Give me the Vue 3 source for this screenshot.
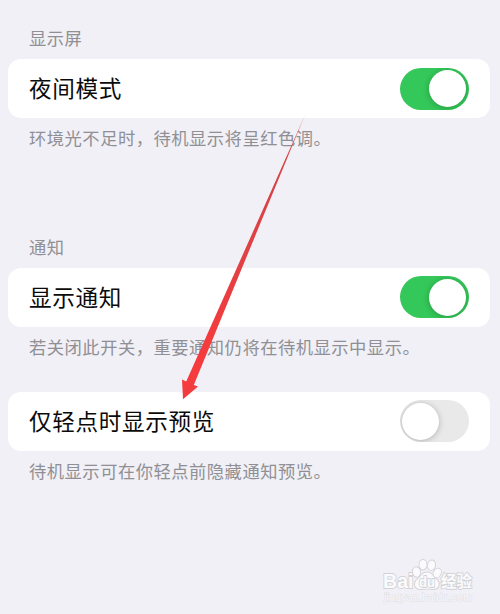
<script setup>
import { ref } from 'vue';

const groups = ref([
	{
		id: 'night',
		header: '显示屏',
		label: '夜间模式',
		footer: '环境光不足时，待机显示将呈红色调。',
		on: true,
	},
	{
		id: 'notice',
		header: '通知',
		label: '显示通知',
		footer: '若关闭此开关，重要通知仍将在待机显示中显示。',
		on: true,
	},
	{
		id: 'preview',
		header: '',
		label: '仅轻点时显示预览',
		footer: '待机显示可在你轻点前隐藏通知预览。',
		on: false,
	},
]);

const toggle = (group) => {
	group.on = !group.on;
};
</script>

<template>
	<main class="settings">
		<section
			v-for="group in groups"
			:key="group.id"
			class="group"
			:class="group.id"
		>
			<h2 v-if="group.header" class="header">{{ group.header }}</h2>
			<div class="card">
				<span class="label">{{ group.label }}</span>
				<button
					class="switch"
					:class="{ on: group.on }"
					type="button"
					role="switch"
					:aria-checked="group.on"
					@click="toggle(group)"
				>
					<span class="knob"></span>
				</button>
			</div>
			<p class="footer">{{ group.footer }}</p>
		</section>

		<svg class="arrow" width="500" height="614" viewBox="0 0 500 614">
			<defs>
				<linearGradient id="shaft" x1="0" y1="114" x2="0" y2="340" gradientUnits="userSpaceOnUse">
					<stop offset="0" stop-color="#d9484c" stop-opacity="0.6" />
					<stop offset="0.2" stop-color="#d54347" />
					<stop offset="0.6" stop-color="#e04144" />
					<stop offset="1" stop-color="#f43b3d" />
				</linearGradient>
			</defs>
			<path d="M305.4 114 L193.8 385 L198 386.4 L183 399.3 L182 379.6 L186.2 381.6 Z" fill="url(#shaft)" />
		</svg>

		<svg class="watermark" width="130" height="64" viewBox="0 0 130 64">
			<g class="mark">
				<ellipse cx="46.5" cy="22" rx="3.6" ry="4.8" transform="rotate(-15 46.5 22)" />
				<ellipse cx="53" cy="14.7" rx="3.6" ry="4.8" />
				<ellipse cx="61.5" cy="15.2" rx="3.6" ry="4.8" transform="rotate(12 61.5 15.2)" />
				<ellipse cx="67.2" cy="23" rx="3.5" ry="4.6" transform="rotate(25 67.2 23)" />
				<path d="M57 22.5 C52 22.5 51.5 26.5 48 29 C42.5 33 45 39.5 51 39 C55 38.5 59 38.5 63 39 C69 39.5 71 33 66 29 C62.5 26.5 62 22.5 57 22.5 Z" />
				<text x="13" y="38" class="latin" textLength="30.5" lengthAdjust="spacingAndGlyphs">Bai</text>
				<text x="71" y="36.5" class="han" textLength="31" lengthAdjust="spacingAndGlyphs">经验</text>
				<text x="49" y="36.5" class="du" textLength="16" lengthAdjust="spacingAndGlyphs">du</text>
			</g>
			<text x="14" y="51" class="url" textLength="88" lengthAdjust="spacingAndGlyphs">jingyan.baidu.com</text>
		</svg>
	</main>
</template>

<style>
body {
	margin: 0;
	background: #f1f0f6;
}
</style>

<style scoped>
.settings {
	position: relative;
	box-sizing: border-box;
	height: 614px;
	padding: 25px 10px 0 8px;
	overflow: hidden;
	background: #f1f0f6;
	font-family: 'Noto Sans CJK SC', sans-serif;
}

.group {
	display: flex;
	flex-direction: column;
}

.notice {
	margin-top: 83px;
}

.preview {
	margin-top: 32px;
}

.header,
.footer {
	margin: 0 21px;
	color: #8f8f94;
	font-size: 17.3px;
	font-weight: 400;
	line-height: 26px;
	letter-spacing: 0.5px;
	white-space: nowrap;
}

.header {
	margin-bottom: 8px;
}

.footer {
	margin-top: 7px;
}

.card {
	display: flex;
	align-items: center;
	justify-content: space-between;
	box-sizing: border-box;
	height: 59px;
	padding: 0 21px 1px;
	border-radius: 13px;
	background: #fff;
}

.night .card {
	padding-bottom: 0;
}

.label {
	margin-bottom: 1px;
	color: #0b0b0b;
	font-size: 22.6px;
	line-height: 32px;
	letter-spacing: 0.65px;
}

.switch {
	display: flex;
	box-sizing: border-box;
	width: 69px;
	height: 42px;
	padding: 2.5px 3px 2.5px 2px;
	border: none;
	border-radius: 21px;
	overflow: hidden;
	background: #e9e9ea;
}

.switch.on {
	justify-content: flex-end;
	background: #34c759;
}

.knob {
	width: 37px;
	height: 37px;
	border-radius: 50%;
	background: #fff;
	box-shadow: 0 1px 6px rgba(0, 0, 0, 0.24);
}

.arrow {
	position: absolute;
	top: 0;
	left: 0;
	pointer-events: none;
}

.watermark {
	position: absolute;
	top: 550px;
	left: 370px;
	pointer-events: none;
}

.mark {
	fill: #fbfbfd;
	stroke: #d3d3d7;
	stroke-width: 1.8px;
	paint-order: stroke;
}

.latin {
	font: bold 20px 'Liberation Sans', sans-serif;
}

.han {
	font: bold 15.5px 'Noto Sans CJK SC', sans-serif;
}

.du {
	font: bold 14px 'Liberation Sans', sans-serif;
}

.url {
	font: 10px 'Liberation Sans', sans-serif;
	fill: #f8f8fb;
	stroke: #dddde2;
	stroke-width: 0.8px;
	paint-order: stroke;
}
</style>
